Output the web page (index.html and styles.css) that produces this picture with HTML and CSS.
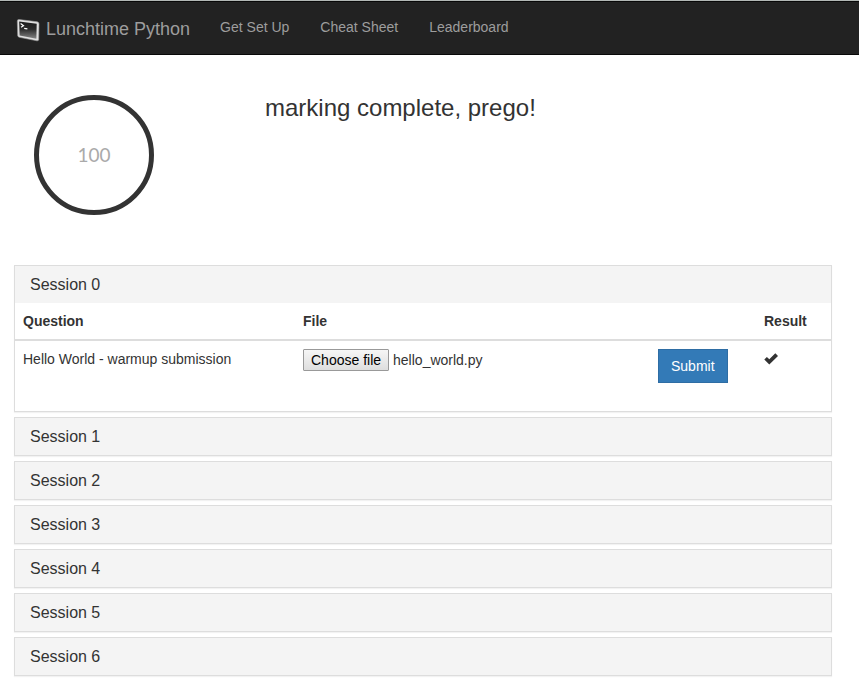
FILE: index.html
```html
<!DOCTYPE html>
<html lang="en">
<head>
<meta charset="utf-8">
<meta name="viewport" content="width=device-width, initial-scale=1">
<title>Lunchtime Python</title>
<link rel="stylesheet" href="styles.css">
</head>
<body>
<nav class="navbar">
  <a class="brand" href="#">
    <svg class="brand-icon" viewBox="0 0 24 24" aria-hidden="true">
      <defs>
        <linearGradient id="screen" x1="0" y1="0" x2="0" y2="1">
          <stop offset="0" stop-color="#1c1c1c"/>
          <stop offset="0.45" stop-color="#2c2c2c"/>
          <stop offset="1" stop-color="#858585"/>
        </linearGradient>
      </defs>
      <path d="M3 1.500 L21.300 3.800 Q23 4.100 23 5.800 L22.700 21.500 Q22.500 23.100 20.900 22.800 L3.300 19.300 Q1.800 18.900 1.700 17.400 L1.300 3 Q1.300 1.300 3 1.500Z" fill="#e0e0e0" stroke="#999" stroke-width=".6"/>
      <path d="M3.200 3.500 L20.700 5.700 L20.400 20.800 L3.600 17.400Z" fill="url(#screen)"/>
      <path d="M4.600 5.600 L7.500 7.700 L5 9.300 M8.200 10.300 L11.400 10.900" fill="none" stroke="#fff" stroke-width="1.200"/>
    </svg>
    <span>Lunchtime Python</span>
  </a>
  <ul class="nav-links">
    <li><a href="#">Get Set Up</a></li>
    <li><a href="#">Cheat Sheet</a></li>
    <li><a href="#">Leaderboard</a></li>
  </ul>
</nav>
<main class="page">
  <header class="status">
    <div class="progress">100</div>
    <h1 class="message">marking complete, prego!</h1>
  </header>
  <div class="sessions">
    <section class="panel">
      <h2 class="panel-title"><a href="#">Session 0</a></h2>
      <table class="tasks">
        <colgroup><col class="col-question"><col><col class="col-submit"><col class="col-result"></colgroup>
        <thead>
          <tr><th>Question</th><th>File</th><th></th><th>Result</th></tr>
        </thead>
        <tbody>
          <tr>
            <td>Hello World - warmup submission</td>
            <td>
              <div class="file-field">
                <input class="file-input" type="file" id="upload">
                <label class="file-button" for="upload">Choose file</label>
                <span class="file-name">hello_world.py</span>
              </div>
            </td>
            <td><button class="submit" type="submit">Submit</button></td>
            <td>
              <svg class="tick" viewBox="0 0 14 14" role="img" aria-label="Correct"><path d="M0.300 7.600 L2.900 5 L5.300 7.300 L11.300 1.300 L14 4 L5.300 12.500Z"/></svg>
            </td>
          </tr>
        </tbody>
      </table>
    </section>
    <section class="panel"><h2 class="panel-title"><a href="#">Session 1</a></h2></section>
    <section class="panel"><h2 class="panel-title"><a href="#">Session 2</a></h2></section>
    <section class="panel"><h2 class="panel-title"><a href="#">Session 3</a></h2></section>
    <section class="panel"><h2 class="panel-title"><a href="#">Session 4</a></h2></section>
    <section class="panel"><h2 class="panel-title"><a href="#">Session 5</a></h2></section>
    <section class="panel"><h2 class="panel-title"><a href="#">Session 6</a></h2></section>
  </div>
</main>
</body>
</html>
```
FILE: styles.css
```css
* { box-sizing: border-box; }

body {
  margin: 0;
  border-top: 1px solid #b2b8b5;
  background: #fff;
  color: #333;
  font: 14px/20px "Liberation Sans", Arial, sans-serif;
}

a { color: inherit; text-decoration: none; }

.navbar {
  display: flex;
  align-items: flex-start;
  background: #222;
  border: solid #080808;
  border-width: 1px 0;
  color: #9d9d9d;
}

.brand {
  display: flex;
  align-items: center;
  gap: 6px;
  padding: 16px 15px 12px 16px;
  font-size: 18px;
  line-height: 24px;
}

.brand span { margin-top: -2px; }

.brand-icon { width: 24px; height: 24px; }

.nav-links {
  display: flex;
  gap: 1px;
  margin: 0;
  padding: 0;
  list-style: none;
}

.nav-links a { display: block; padding: 15px; }

.page { padding: 40px 27px 20px 14px; }

.status {
  display: grid;
  grid-template-columns: 231px 1fr;
  align-items: start;
  padding-left: 20px;
  margin-bottom: 50px;
}

.progress {
  display: flex;
  align-items: center;
  justify-content: center;
  width: 120px;
  height: 120px;
  border: 5px solid #333;
  border-radius: 50%;
  color: #aaa;
  font-family: Lato, sans-serif;
  font-size: 19px;
  font-weight: 400;
}

.message {
  margin: 0;
  font-size: 24px;
  font-weight: 400;
  line-height: 26px;
}

.sessions {
  display: flex;
  flex-direction: column;
  gap: 5px;
}

.panel {
  border: 1px solid #ddd;
  box-shadow: 0 1px 1px rgba(0, 0, 0, .05);
}

.panel-title {
  margin: 0;
  padding: 10px 15px 9px;
  background: #f4f4f4;
  font-size: 16px;
  font-weight: 400;
  line-height: 18px;
}

.tasks {
  width: 100%;
  margin-bottom: 20px;
  border-collapse: separate;
  border-spacing: 0;
  table-layout: fixed;
}

.col-question { width: 280px; }
.col-submit { width: 106px; }
.col-result { width: 75px; }

.tasks th,
.tasks td {
  padding: 8px;
  text-align: left;
  vertical-align: top;
}

.tasks th { border-bottom: 2px solid #ddd; }

.file-field {
  display: flex;
  align-items: center;
  gap: 4px;
}

.file-input {
  position: absolute;
  width: 1px;
  height: 1px;
  opacity: 0;
}

.file-button {
  padding: 0 7px;
  border: 1px solid #999;
  border-radius: 1px;
  background: linear-gradient(#f6f6f6, #dedede);
  color: #000;
}

.submit {
  display: block;
  padding: 6px 12px;
  border: 1px solid #2e6da4;
  background: #337ab7;
  color: #fff;
  font: inherit;
}

.tick {
  display: block;
  width: 14px;
  height: 14px;
  margin-top: 3px;
  fill: #333;
}
```
